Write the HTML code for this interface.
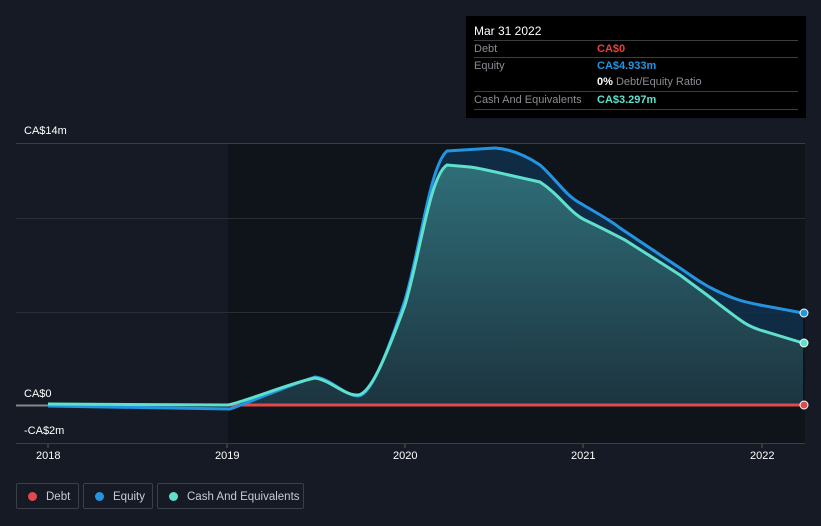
<!DOCTYPE html><html><head><style>
body{margin:0;width:821px;height:526px;background:#151a24;font-family:"Liberation Sans",sans-serif;overflow:hidden;position:relative}
.t{position:absolute;color:#fff;font-size:11px}
.tip{position:absolute;left:466px;top:16px;width:340px;height:102px;background:#000}
.tip .r{position:absolute;left:8px;width:324px;border-top:1px solid #3a3d42;height:17px;font-size:11px;color:#8a8d92;line-height:17px}
.leg{position:absolute;top:483px;height:26px;border:1px solid #3a3f48;border-radius:2px;color:#c9ccd1;font-size:11.5px;line-height:26px;box-sizing:border-box;white-space:nowrap;overflow:hidden}
.leg i{display:inline-block;width:9px;height:9px;border-radius:50%;margin:0 9px 0 11px;vertical-align:-1px}
</style></head><body>
<svg width="821" height="526" style="position:absolute;left:0;top:0">
<defs><linearGradient id="g" x1="0" y1="0" x2="0" y2="1"><stop offset="0" stop-color="#2f6e78"/><stop offset="1" stop-color="#1c3440"/></linearGradient></defs>
<rect x="228" y="143" width="577" height="300" fill="#0f131a"/>
<line x1="16" y1="143.5" x2="805" y2="143.5" stroke="#3a3e45"/>
<line x1="16" y1="218.5" x2="805" y2="218.5" stroke="#2a2e35"/>
<line x1="16" y1="312.5" x2="805" y2="312.5" stroke="#2a2e35"/>
<line x1="16" y1="443.5" x2="805" y2="443.5" stroke="#3a3e45"/>
<line x1="16" y1="405.5" x2="48" y2="405.5" stroke="#888" stroke-width="2"/>
<path d="M48,406 L230,409 C250,402 290,385 315,377 C330,378 345,396 358,396 C370,396 385,360 405,300 C420,250 430,165 447,151 L495,148 C510,149 525,155 540,165 C555,178 565,195 580,203 C600,215 610,220 620,228 C650,248 660,255 680,268 C700,282 705,285 715,290 C735,300 745,302 760,305 L803,313 L803,405 L48,405Z" fill="#11304a" opacity=".9"/>
<path d="M48,404 L228,405 C250,400 290,383 315,378 C330,380 345,396 358,395 C370,394 385,360 405,305 C420,255 430,175 447,165 L470,167 C480,168 490,171 540,182 C560,195 570,213 585,220 C610,232 615,235 625,240 C650,256 660,262 680,275 C700,290 705,293 720,305 C740,320 745,325 760,330 L803,343 L803,405 L48,405Z" fill="url(#g)"/>
<line x1="228" y1="405" x2="805" y2="405" stroke="#e04a4a" stroke-width="3"/>
<path d="M48,406 L230,409 C250,402 290,385 315,377 C330,378 345,396 358,396 C370,396 385,360 405,300 C420,250 430,165 447,151 L495,148 C510,149 525,155 540,165 C555,178 565,195 580,203 C600,215 610,220 620,228 C650,248 660,255 680,268 C700,282 705,285 715,290 C735,300 745,302 760,305 L803,313" fill="none" stroke="#2394e0" stroke-width="3"/>
<path d="M48,404 L228,405 C250,400 290,383 315,378 C330,380 345,396 358,395 C370,394 385,360 405,305 C420,255 430,175 447,165 L470,167 C480,168 490,171 540,182 C560,195 570,213 585,220 C610,232 615,235 625,240 C650,256 660,262 680,275 C700,290 705,293 720,305 C740,320 745,325 760,330 L803,343" fill="none" stroke="#5fe0cc" stroke-width="3"/>
<circle cx="804" cy="313" r="4" fill="#2394e0" stroke="#fff"/>
<circle cx="804" cy="343" r="4" fill="#5fe0cc" stroke="#fff"/>
<circle cx="804" cy="405" r="4" fill="#e04a4a" stroke="#fff"/>
<g stroke="#555"><line x1="48" y1="444" x2="48" y2="448"/><line x1="227" y1="444" x2="227" y2="448"/><line x1="405" y1="444" x2="405" y2="448"/><line x1="583" y1="444" x2="583" y2="448"/><line x1="762" y1="444" x2="762" y2="448"/></g>
</svg>
<div class="t" style="left:24px;top:125px">CA$14m</div>
<div class="t" style="left:24px;top:388px">CA$0</div>
<div class="t" style="left:24px;top:425px">-CA$2m</div>
<div class="t" style="left:36px;top:450px">2018</div>
<div class="t" style="left:215px;top:450px">2019</div>
<div class="t" style="left:393px;top:450px">2020</div>
<div class="t" style="left:571px;top:450px">2021</div>
<div class="t" style="left:750px;top:450px">2022</div>
<div class="tip">
<div style="position:absolute;left:8px;top:8px;color:#fff;font-size:12px">Mar 31 2022</div>
<div class="r" style="top:24px">Debt<span style="position:absolute;left:123px;color:#e8403f;font-weight:bold">CA$0</span></div>
<div class="r" style="top:41px">Equity<span style="position:absolute;left:123px;color:#2394e0;font-weight:bold">CA$4.933m</span></div>
<div class="r" style="top:58px;border:0"><span style="position:absolute;left:123px"><b style="color:#fff">0%</b> Debt/Equity Ratio</span></div>
<div class="r" style="top:75px">Cash And Equivalents<span style="position:absolute;left:123px;color:#5fe0cc;font-weight:bold">CA$3.297m</span></div>
<div class="r" style="top:93px;height:0"></div>
</div>
<div class="leg" style="left:16px;width:63px"><i style="background:#e04a4a"></i>Debt</div>
<div class="leg" style="left:83px;width:70px"><i style="background:#2394e0"></i>Equity</div>
<div class="leg" style="left:157px;width:147px"><i style="background:#5fe0cc"></i>Cash And Equivalents</div>
</body></html>
